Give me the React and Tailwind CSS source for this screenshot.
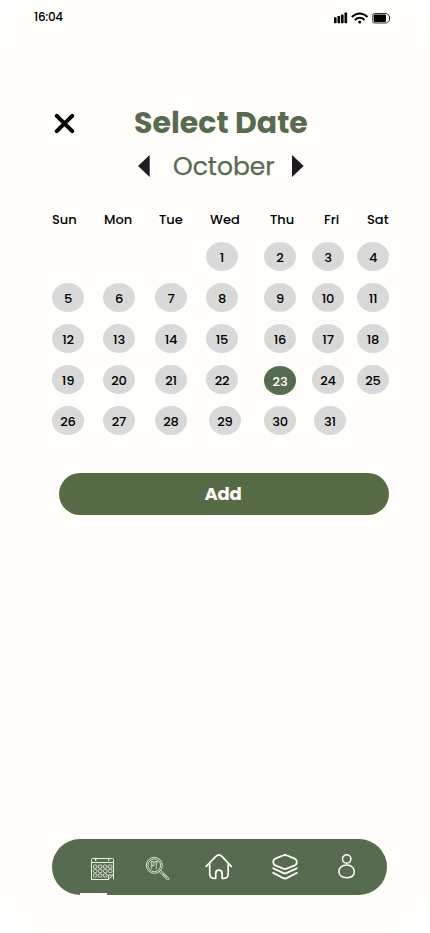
import React from "react";

const weekdays = [
  { name: "Sun", cls: "" },
  { name: "Mon", cls: "pl-px" },
  { name: "Tue", cls: "pl-1" },
  { name: "Wed", cls: "pl-1" },
  { name: "Thu", cls: "pl-1.5" },
  { name: "Fri", cls: "pl-3" },
  { name: "Sat", cls: "pl-2.5" },
];

const days = [null, null, null, ...Array.from({ length: 31 }, (_, i) => i + 1)];

// Small per-day nudges of the pills
const nudge = { 23: "mt-px -mb-px", 29: "ml-[3px]", 31: "ml-0.5" };

function StatusBar() {
  return (
    <div className="flex h-[34px] items-center justify-between pl-[34px] pr-[39px]">
      <span className="text-[12px] font-medium leading-[34px] tracking-[-0.3px] text-black">16:04</span>
      <div className="flex items-center pt-[2px]">
        <svg width="14" height="12" viewBox="0 0 14 12" fill="#000">
          <rect x="0" y="5.2" width="2.6" height="6" rx=".6" />
          <rect x="3.5" y="4" width="2.6" height="7.2" rx=".6" />
          <rect x="7" y="2.4" width="2.6" height="8.8" rx=".6" />
          <rect x="10.5" y=".6" width="2.6" height="10.6" rx=".6" />
        </svg>
        <svg className="ml-[3px]" width="18" height="12" viewBox="0 0 18 12" fill="none" stroke="#000" strokeWidth="1.9">
          <path d="M.8 5Q8.5-2 16.6 5" />
          <path d="M3.8 8Q8.7 3.6 13.6 8" />
          <circle cx="8.7" cy="10" r="1.5" fill="#000" stroke="none" />
        </svg>
        <svg className="ml-[3px]" width="19" height="12" viewBox="0 0 19 12" fill="none">
          <path d="M2.500 1.500H14.500L17.500 4V8.500L14.500 11H2.500Q.8 11 .8 9.500V3Q.8 1.500 2.500 1.500Z" stroke="#000" strokeOpacity=".8" />
          <rect x="1.800" y="2.600" width="12.200" height="7.300" rx=".8" fill="#000" />
        </svg>
      </div>
    </div>
  );
}

function CalendarIcon() {
  return (
    <svg width="24" height="24" viewBox="0 0 24 24" fill="none" stroke="#e9eee5" strokeWidth="1">
      <path d="M23.500 22.500V2.500q0-1-1-1H2.500q-1 0-1 1V22.500H18.500L23 18H18.500V22.500M1.500 5.500H23.500" />
      <path d="M5.700 .8v3.200M18.700 .8v3.200" strokeWidth="1.300" />
      <g strokeWidth=".9">
        {[8, 12.4, 16.8].map((y) =>
          [3.4, 8.4, 13.4, 18.4].map((x) =>
            x > 18 && y > 16 ? null : <rect key={x + "-" + y} x={x} y={y} width="3.600" height="3.200" rx="1.200" />
          )
        )}
      </g>
    </svg>
  );
}

function SearchIcon() {
  return (
    <svg width="26" height="26" viewBox="0 0 26 26" fill="none" stroke="#e9eee5" strokeWidth=".9">
      <circle cx="9.300" cy="9.300" r="8" />
      <circle cx="9.300" cy="9.300" r="6.300" />
      <text
        x="5.600"
        y="13.100"
        fontSize="10.500"
        fontWeight="700"
        textLength="7.600"
        lengthAdjust="spacingAndGlyphs"
        fill="#e9eee5"
        fillOpacity=".85"
        stroke="none"
        fontFamily="Liberation Sans, sans-serif"
      >
        PT
      </text>
      <path d="M14.400 15.800L15.800 14.400L23.800 22.200Q24 24 22.200 23.800ZM17.500 17.300L22 21.800" />
    </svg>
  );
}

function HomeIcon() {
  return (
    <svg width="28" height="26" viewBox="0 0 28 26" fill="none" stroke="#fffefa" strokeWidth="1.700" strokeLinecap="round" strokeLinejoin="round">
      <path d="M1.200 12.300L10.600 2.600Q14 -.6 17.200 2.600L26.300 12.300" />
      <path d="M4.700 9.300V19.500Q4.700 24.300 8.800 24.300H10.700V19.500Q10.700 16.200 13.900 16.200T17.100 19.500V24.300H19Q23.200 24.300 23.200 19.500V9.300" />
    </svg>
  );
}

function LayersIcon() {
  return (
    <svg width="26" height="27" viewBox="0 0 26 27" fill="none" stroke="#fffefa" strokeWidth="1.800" strokeLinecap="round" strokeLinejoin="round">
      <path d="M11 1.500Q13 .5 15 1.500L22.800 4.700Q24.800 5.600 24.800 8T22.800 11.300L15 14.500Q13 15.400 11 14.500L3.200 11.300Q1.200 10.400 1.200 8T3.200 4.700Z" />
      <path d="M1.200 14.200L11 18.900Q13 19.800 15 18.900L24.800 14.200" />
      <path d="M1.200 18.900L11 24Q13 25 15 24L24.800 18.900" />
    </svg>
  );
}

function UserIcon() {
  return (
    <svg width="18" height="26" viewBox="0 0 18 26" fill="none" stroke="#fffefa" strokeWidth="1.500">
      <circle cx="8.700" cy="5" r="4.200" />
      <path d="M8.700 11C13.400 11 16.200 14 16.200 17.500S13.700 23.700 8.700 23.700S.9 21 .9 17.500S4 11 8.700 11Z" />
    </svg>
  );
}

export default function App() {
  return (
    <main className="flex h-[933px] w-[430px] flex-col overflow-hidden rounded-[42px] bg-[#fffefa] font-['Poppins','Inter',sans-serif]">
      <StatusBar />

      <header className="mt-[69px] flex h-10 items-center pl-[54px]">
        <button aria-label="Close" className="block">
          <svg width="21" height="21" viewBox="0 0 21 21" fill="none" stroke="#000" strokeWidth="4" strokeLinecap="round">
            <path d="M2.800 2.800L18.200 18.200M18.200 2.800L2.800 18.200" />
          </svg>
        </button>
        <h1 className="ml-[59px] whitespace-nowrap text-[30px] font-bold leading-10 text-[#566b4f]">Select Date</h1>
      </header>

      <div className="mt-2 flex h-[30px] items-center pl-[138px]">
        <svg width="12" height="22" viewBox="0 0 12 22" fill="#1d1b20">
          <path d="M0 11L11.700 0V22Z" />
        </svg>
        <div className="ml-[23px] w-[119px] whitespace-nowrap pt-[2px] text-[25px] leading-[30px] text-[#566b4f] [-webkit-text-stroke:0.25px_#566b4f]">October</div>
        <svg width="12" height="22" viewBox="0 0 12 22" fill="#1d1b20">
          <path d="M11.700 11L0 0V22Z" />
        </svg>
      </div>

      <section className="mt-[29px] pl-[52px]">
        <div className="grid h-5 grid-cols-[51px_52px_51px_58px_48px_45px_32px] text-[13px] font-medium leading-5 text-black">
          {weekdays.map((d) => (
            <span key={d.name} className={d.cls}>{d.name}</span>
          ))}
        </div>
        <div className="mt-3 grid grid-cols-[51px_52px_51px_58px_48px_45px_32px] gap-y-3">
          {days.map((d, i) =>
            d ? (
              <button
                key={i}
                className={`flex h-[29px] w-8 items-center justify-center rounded-[50%] pt-[2px] text-[13px] font-medium leading-none tracking-[-0.2px] ${
                  d === 23 ? "bg-[#566b4f] text-[#fffefa]" : "bg-[#d9d9d9] text-black"
                } ${nudge[d] || ""}`}
              >
                {d}
              </button>
            ) : (
              <span key={i} />
            )
          )}
        </div>
      </section>

      <button className="ml-[59px] mt-[38px] h-[42px] w-[330px] shrink-0 rounded-full bg-[#566b45] pr-[2px] text-[18px] font-bold leading-[42px] tracking-[-0.2px] text-[#fffefa]">
        Add
      </button>

      <nav className="mb-[38px] ml-[52px] mt-auto flex h-14 w-[335px] shrink-0 items-start rounded-[28px] bg-[#566b4f]">
        <div className="flex h-14 w-[93px] flex-col justify-between pl-7 pt-[18px]">
          <div className="pl-2.5"><CalendarIcon /></div>
          <div className="h-[2px] w-[27px] bg-[#fffefa]" />
        </div>
        <div className="pt-[17px]"><SearchIcon /></div>
        <div className="ml-[34px] pt-[15px]"><HomeIcon /></div>
        <div className="ml-[39px] pt-[15px]"><LayersIcon /></div>
        <div className="ml-10 pt-[15px]"><UserIcon /></div>
      </nav>
    </main>
  );
}
